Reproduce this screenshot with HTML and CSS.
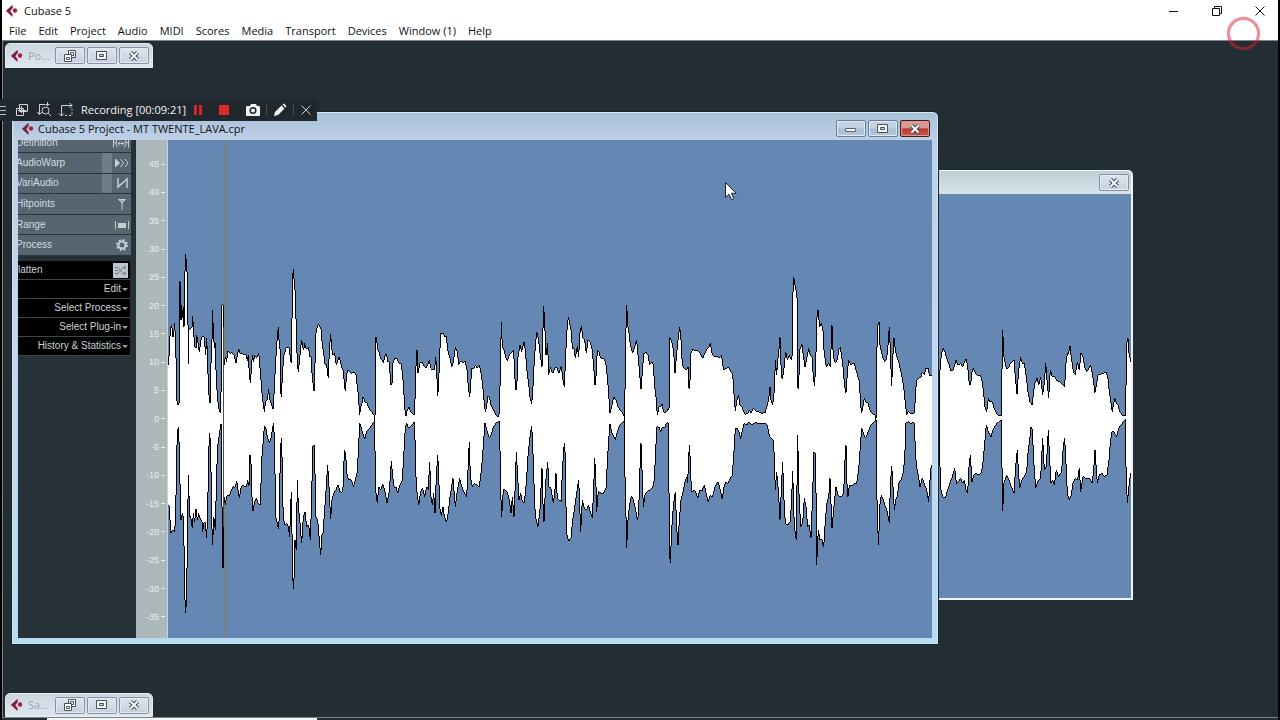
FILE: index.html
```
<!DOCTYPE html>
<html lang="en">
<head>
<meta charset="utf-8">
<title>Cubase 5</title>
<link rel="stylesheet" href="styles.css">
</head>
<body>
<svg class="defs" aria-hidden="true">
  <defs>
    <symbol id="logo" viewBox="0 0 12 12"><path d="M6.5 0v3L4.200 6l2.300 3v3L0 6z" fill="#8c1c3c"/><path d="M6.500 0v3L4.200 6H0z" fill="#6d2640"/><circle cx="9" cy="5.500" r="2.200" fill="#b01c40"/></symbol>
    <symbol id="restore" viewBox="0 0 12 12"><path d="M4.500.500h7v7h-7z" fill="#fff" stroke="#46505f"/><path d="M6.500 2.500h3v3h-3z" fill="none" stroke="#46505f"/><path d="M.500 4.500h7v7h-7z" fill="#fff" stroke="#46505f"/><path d="M2.500 7.500h3v2h-3z" fill="none" stroke="#46505f"/></symbol>
    <symbol id="max" viewBox="0 0 12 10"><path d="M.5.5h10v8H.5z" fill="#fff" stroke="#46505f"/><path d="M3.500 3.500h4v2h-4z" fill="#cfd8e4" stroke="#46505f"/></symbol>
    <symbol id="min" viewBox="0 0 12 10"><path d="M.5 4.500h10v3H.5z" fill="#fff" stroke="#56677c"/></symbol>
    <symbol id="cross" viewBox="0 0 12 10"><path d="M2.500 1.500l7 7m0-7l-7 7" stroke="#3f4857" stroke-width="4"/><path d="M2.500 1.500l7 7m0-7l-7 7" stroke="#fff" stroke-width="2"/></symbol>
  </defs>
</svg>

<div class="app">
  <header class="titlebar">
    <svg class="logo"><use href="#logo"/></svg>
    <h1>Cubase 5</h1>
    <div class="syskeys">
      <button aria-label="Minimize"><svg width="12" height="12"><path d="M1 6.500h9" stroke="#111"/></svg></button>
      <button aria-label="Restore"><svg width="12" height="12" fill="none" stroke="#111"><path d="M1.500 3.500h7v7h-7zM3.500 3V1.500h7v7H9"/></svg></button>
      <button aria-label="Close"><svg width="12" height="12"><path d="M1.500 1.500l9 9m0-9l-9 9" stroke="#111"/></svg></button>
    </div>
  </header>
  <nav class="menu">
    <button>File</button><button>Edit</button><button>Project</button><button>Audio</button><button>MIDI</button><button>Scores</button><button>Media</button><button>Transport</button><button>Devices</button><button>Window (1)</button><button>Help</button>
  </nav>

  <main class="desktop">
    <section class="mini mini-top">
      <svg class="logo"><use href="#logo"/></svg><span>Po...</span>
      <button aria-label="Restore"><svg width="12" height="12"><use href="#restore"/></svg></button>
      <button aria-label="Maximize"><svg width="12" height="10"><use href="#max"/></svg></button>
      <button aria-label="Close"><svg width="12" height="10"><use href="#cross"/></svg></button>
    </section>

    <section class="back">
      <div class="back-head"><button aria-label="Close"><svg width="12" height="10"><use href="#cross"/></svg></button></div>
      <svg class="back-wave" viewBox="930 194 202 404" preserveAspectRatio="xMinYMin slice">
        <g class="wave" transform="translate(930 320) scale(.3333)">
          <path d="M29 295L30 150 32 120 36 95 40 85 45 95 50 115 56 130 63 152 70 150 78 120 84 135 92 130 98 140 103 125 109 117 114 150 118 195 122 195 125 160 130 143 136 160 145 168 151 165 157 185 161 220 165 260 170 275 175 235 180 245 187 245 192 265 200 280 208 288 214 288 216 150 218 30 222 110 229 145 235 145 241 130 252 120 256 170 261 222 266 150 272 112 277 130 283 130 289 170 294 215 300 245 306 255 311 215 315 190 321 175 326 195 332 172 338 225 343 190 347 128 351 180 356 235 361 150 367 170 374 170 381 182 388 185 395 190 404 200 408 130 412 100 416 100 420 78 425 120 430 155 436 165 442 125 448 150 453 100 459 110 464 140 470 155 477 145 482 135 488 165 495 218 500 190 504 165 512 163 520 160 528 157 534 175 538 215 547 275 550 255 554 235 559 250 564 255 569 275 577 285 586 287 588 200 590 70 594 55 597 100 602 125 610 140 610 295"/>
          <path d="M29 295L30 440 33 510 38 530 46 535 53 510 60 490 67 470 74 445 79 490 86 485 92 475 98 490 103 480 108 510 113 520 117 440 121 405 126 485 132 465 139 460 146 465 154 460 160 420 164 370 169 315 175 335 183 350 189 330 197 315 206 305 214 300 216 440 218 572 222 490 230 465 237 480 244 500 252 520 257 440 262 390 265 450 269 505 275 480 283 470 290 455 294 400 299 360 303 320 307 330 311 420 317 505 323 485 332 475 338 355 343 450 349 440 355 330 359 420 363 490 368 480 373 495 379 450 386 470 395 455 400 380 404 355 408 430 412 520 418 540 424 525 429 490 436 475 443 480 448 445 452 515 459 470 468 475 478 475 487 490 491 450 495 390 502 490 508 465 516 460 523 470 531 465 537 420 541 370 546 335 552 335 560 350 566 325 575 312 586 298 588 440 592 550 597 500 602 460 610 448 610 295"/>
        </g>
      </svg>
    </section>

    <section class="project">
      <div class="project-head">
        <svg class="logo"><use href="#logo"/></svg>
        <h2>Cubase 5 Project - MT TWENTE_LAVA.cpr</h2>
        <button aria-label="Minimize"><svg width="12" height="10"><use href="#min"/></svg></button>
        <button aria-label="Maximize"><svg width="12" height="10"><use href="#max"/></svg></button>
        <button class="danger" aria-label="Close"><svg width="12" height="10"><use href="#cross"/></svg></button>
      </div>
      <div class="editor">
        <aside class="inspector">
          <div class="tabs">
            <button class="cut"><span>Definition</span><svg width="18" height="12" fill="none" stroke="#c5ced3"><path d="M1.500 10.500v-8h3v3h-3m2 0l2 5M6 6.500h6M8 4.500l-2 2 2 2m2-4l2 2-2 2m6.500 2v-8h-3v3h3m-2 0l-2 5"/></svg></button>
            <button><span>AudioWarp</span><i></i><svg width="16" height="12" fill="none" stroke="#c5ced3"><path d="M1.500 2l4 4-4 4z" fill="#c5ced3"/><path d="M6.500 2l3 4-3 4m4.500-8l3 4-3 4"/></svg></button>
            <button><span>VariAudio</span><i></i><svg width="16" height="12" fill="none" stroke="#c5ced3" stroke-width="1.500"><path d="M4 1v9L13 2v9M4 10l3-3"/></svg></button>
            <button><span>Hitpoints</span><svg width="16" height="12" fill="none" stroke="#c5ced3"><path d="M4.500 1.500h7L8 5z" fill="#9aa6ad"/><path d="M8 4v8"/></svg></button>
            <button><span>Range</span><svg width="16" height="12" fill="none" stroke="#c5ced3"><path d="M1.500 2v8m13-8v8"/><path d="M4 4h8v5H4z" fill="#c5ced3" stroke="none"/></svg></button>
            <button><span>Process</span><svg width="16" height="12" fill="none" stroke="#c5ced3"><circle cx="8" cy="6" r="3.500" stroke-width="2"/><circle cx="8" cy="6" r="5" stroke-width="2" stroke-dasharray="2 1.930"/></svg></button>
          </div>
          <div class="actions">
            <button class="flatten"><span>latten</span><svg width="15" height="15"><path d="M0 0h15v15H0z" fill="#b9c5cb"/><path d="M2 4.500h3l5 6h3M2 10.500h3l5-6h3M11 3l2 1.500L11 6m0 3l2 1.500-2 1.500M2 7.500h3" fill="none" stroke="#6d7c86"/></svg></button>
            <button>Edit<b></b></button>
            <button>Select Process<b></b></button>
            <button>Select Plug-in<b></b></button>
            <button>History &amp; Statistics<b></b></button>
          </div>
        </aside>
        <div class="scale">
          <span>45</span><span>40</span><span>35</span><span>30</span><span>25</span><span>20</span><span>15</span><span>10</span><span>5</span><span>0</span><span>-5</span><span>-10</span><span>-15</span><span>-20</span><span>-25</span><span>-30</span><span>-35</span>
        </div>
        <svg class="main-wave" viewBox="168 140 764 498">
          <path d="M224.500 140v498" stroke="#827f6c" stroke-width="2"/>
          <g class="wave" transform="translate(160 240) scale(.3333)">
            <path d="M24 537L24 375 26 350 29 345 30 290 32 262 35 255 37 270 39 292 42 275 44 250 46 295 48 350 50 470 52 495 57 495 58 380 60 122 61 230 63 240 65 195 67 235 70 200 72 260 74 120 77 42 80 90 82 100 84 250 85 372 87 268 93 265 96 262 98 228 100 265 102 292 105 320 108 325 110 285 114 310 118 335 121 315 124 292 128 288 132 290 134 310 137 345 140 295 142 340 144 400 147 465 150 490 153 370 156 300 158 210 160 285 164 325 166 310 168 390 172 470 178 515 182 518 184 400 186 195 190 195 190 255 192 375 196 350 200 365 203 332 210 340 216 338 222 345 228 368 232 345 236 328 240 340 250 342 258 345 262 362 265 345 268 400 271 430 274 390 277 345 281 365 284 345 290 355 296 338 299 370 303 420 307 470 313 515 317 485 322 478 326 448 329 475 335 495 340 508 343 440 346 385 349 330 352 290 355 260 357 300 360 320 361 440 364 470 368 390 372 345 378 325 382 322 388 325 392 365 395 368 397 120 400 88 403 130 406 160 409 270 412 370 415 395 420 345 422 325 425 300 428 320 431 330 434 310 438 325 442 325 446 322 449 350 453 350 456 400 459 430 462 453 465 370 467 285 472 260 476 253 480 262 484 270 487 320 491 335 494 372 500 375 505 415 508 330 512 283 515 320 518 345 524 340 529 375 534 360 538 350 542 368 546 385 550 390 553 430 556 453 559 415 562 390 568 395 576 400 582 395 588 405 591 430 595 465 599 525 602 500 607 485 609 470 615 485 621 490 627 505 635 515 641 526 645 526 645 537"/>
            <path d="M24 537L24 795 28 800 30 840 33 880 38 870 44 875 47 830 49 700 52 575 56 562 58 650 61 770 63 840 67 820 70 830 73 960 75 1080 77 1118 80 1070 82 900 84 780 86 705 88 830 92 830 97 865 100 820 104 845 108 808 112 840 116 820 120 835 126 845 128 875 132 850 135 845 140 893 143 820 146 640 149 580 152 620 155 840 158 915 161 830 166 870 170 700 173 620 180 570 183 552 185 600 187 983 190 983 190 880 192 770 196 795 200 768 207 768 214 752 218 740 226 742 230 722 234 750 238 773 243 745 248 735 254 740 260 740 263 720 267 738 270 645 273 670 276 770 279 812 284 785 289 775 294 790 300 795 303 730 306 650 310 600 313 560 317 562 322 590 328 610 333 595 338 565 341 548 343 600 345 700 347 830 351 845 355 868 358 830 361 640 364 595 366 650 369 800 373 855 380 850 385 860 389 890 392 800 394 755 396 880 398 1000 400 1046 403 1000 405 900 409 930 412 720 415 800 420 850 425 910 430 830 435 815 440 860 446 855 451 900 455 780 458 620 462 615 465 700 467 830 473 840 478 900 482 945 486 885 490 878 493 820 497 770 503 675 507 740 512 838 516 780 521 760 528 750 534 735 540 755 546 758 550 735 553 630 557 640 560 700 566 720 574 720 581 740 586 720 591 700 595 640 599 550 603 560 608 580 614 597 620 575 630 565 638 550 645 543 645 537"/>
            <path class="thin" d="M192 260V860"/>
          </g>
          <g class="wave" transform="translate(370 290) scale(.3333)">
            <path d="M13 387L15 378 17 250 18 140 21 160 24 180 28 190 32 205 40 218 46 195 50 195 53 215 58 215 62 285 66 280 69 220 74 205 80 205 86 218 94 222 98 255 101 300 105 360 108 378 112 360 117 352 121 362 127 370 133 375 135 330 138 230 141 180 144 250 150 220 156 215 160 225 168 235 173 225 178 210 182 235 188 240 194 240 197 200 200 240 203 318 206 280 209 190 213 130 220 130 224 140 229 138 233 180 240 205 245 230 250 215 256 172 262 185 266 225 272 213 280 220 285 212 291 240 295 290 299 322 302 280 306 235 312 235 317 225 322 235 328 225 333 250 338 285 342 330 346 367 350 345 354 318 359 325 363 345 370 360 378 375 384 382 388 370 391 250 394 97 397 170 402 180 407 200 412 213 418 195 424 190 430 180 434 230 436 300 440 300 444 200 450 165 455 185 462 155 466 180 470 235 476 280 480 320 485 342 488 310 492 230 496 170 500 125 505 145 509 180 516 232 518 150 521 48 525 120 528 195 533 160 536 255 541 232 548 250 555 235 560 232 567 250 574 228 578 265 583 290 586 220 590 130 595 82 599 100 604 125 607 175 612 175 616 205 622 168 626 200 630 130 634 108 639 145 644 150 649 190 654 150 660 155 666 175 670 215 675 285 678 260 682 180 687 185 692 205 700 205 707 215 712 260 716 310 720 368 725 350 731 320 738 330 744 350 752 362 760 372 763 380 763 387"/>
            <path d="M13 387L15 480 17 600 22 640 26 590 32 600 38 582 45 605 51 638 57 610 61 560 64 512 68 560 73 595 78 590 83 610 90 585 97 570 101 500 105 430 109 398 115 412 120 412 128 402 134 395 136 500 139 590 146 645 152 605 158 595 164 620 170 590 175 600 179 515 183 620 187 645 191 610 195 670 199 560 203 495 206 550 209 650 214 678 219 650 223 680 230 697 235 665 240 620 245 590 249 565 256 650 262 600 269 565 275 590 282 605 290 620 294 540 298 455 301 560 307 590 313 580 320 585 327 592 332 560 337 510 341 450 345 400 350 420 358 443 364 435 370 410 378 400 388 393 390 480 392 600 395 680 400 600 406 600 413 610 419 635 423 670 427 620 432 680 436 580 439 485 443 560 447 630 452 610 457 635 463 640 469 580 474 500 479 450 485 408 488 460 492 580 496 680 504 710 510 660 516 535 519 640 522 695 527 580 533 515 537 590 543 595 550 640 555 600 558 550 562 625 568 630 574 635 577 540 583 460 586 500 588 650 591 735 596 753 603 745 608 690 613 660 620 610 626 570 629 640 632 725 637 630 643 655 650 660 655 645 661 665 667 683 671 600 674 505 677 550 680 665 685 605 692 608 700 612 708 595 712 520 716 450 720 402 725 425 731 440 736 450 742 425 750 405 763 392 763 387"/>
          </g>
          <g class="wave" transform="translate(560 290) scale(.3333)">
            <path d="M193 387L195 300 197 150 200 45 204 110 207 130 211 165 218 190 224 170 230 150 234 195 238 240 243 298 248 230 252 190 258 187 264 195 269 225 275 215 280 225 284 290 288 320 292 375 297 350 302 350 306 342 311 365 317 368 324 358 327 360 329 142 335 155 341 185 345 250 349 200 353 160 359 110 363 150 367 225 373 235 379 240 384 230 386 290 389 298 393 190 398 178 405 183 414 183 420 190 428 205 435 190 440 178 447 172 451 160 456 190 464 200 471 198 478 205 484 195 491 240 498 235 506 232 513 245 518 250 521 300 526 362 531 330 536 315 540 345 546 350 551 365 556 375 560 368 564 370 569 360 573 370 580 355 587 362 600 368 605 370 615 368 622 345 626 330 630 290 633 330 638 345 642 310 644 280 646 210 650 255 653 210 656 190 660 142 664 250 667 268 672 235 677 185 682 210 688 195 694 210 697 195 698 30 701 -40 707 -5 711 10 713 295 716 295 719 180 726 163 730 195 735 230 741 200 746 175 751 195 756 200 760 260 764 288 768 190 770 90 774 60 779 110 784 100 789 120 792 180 799 232 806 220 811 230 816 105 820 200 826 220 832 210 836 180 841 172 846 205 850 240 854 290 858 308 862 250 866 210 873 225 882 218 890 245 897 270 901 320 904 370 909 350 913 325 918 335 925 340 929 360 937 370 947 377 947 387"/>
            <path d="M193 387L195 560 198 680 200 773 204 690 208 650 214 618 220 630 226 655 232 690 236 670 239 560 243 460 246 540 250 650 256 610 262 605 270 600 278 592 283 570 287 480 291 410 297 412 302 425 308 410 313 415 320 398 325 400 327 600 328 780 331 820 335 720 340 650 346 605 350 710 354 765 358 690 363 630 369 605 374 580 380 560 383 580 386 500 389 465 392 560 396 605 403 600 408 608 413 625 419 600 426 602 433 585 438 610 445 635 451 615 457 622 464 595 470 580 475 575 481 600 487 628 492 590 498 575 503 582 509 570 517 555 521 500 526 415 532 415 537 425 542 448 547 420 553 400 560 405 568 395 574 405 582 400 588 398 600 402 615 400 622 405 626 430 632 445 640 450 643 500 646 600 650 545 655 600 660 690 664 600 668 515 671 610 676 700 683 705 691 695 695 630 698 542 703 710 709 750 713 435 717 610 722 710 728 700 733 625 738 650 743 710 748 705 753 745 758 610 762 485 766 490 769 660 770 825 775 720 780 750 786 750 791 772 797 680 802 630 806 625 810 565 816 715 822 650 828 590 834 615 844 622 851 610 855 510 858 465 861 580 864 620 868 585 876 588 883 580 890 580 896 540 901 470 905 415 910 430 917 445 925 425 932 405 947 392 947 387"/>
          </g>
          <g class="wave" transform="translate(750 260) scale(.3333)">
            <path d="M378 477L380 330 382 200 387 185 389 250 393 270 398 290 404 305 409 300 413 270 418 200 421 270 425 378 428 300 432 235 436 270 441 290 447 310 453 335 458 360 462 390 465 420 470 465 475 455 483 460 493 460 497 400 499 365 505 355 514 352 517 335 523 345 528 325 535 325 538 345 552 348 552 477"/>
            <path d="M378 477L380 650 382 780 386 855 389 740 394 705 400 720 406 740 412 755 418 790 421 680 425 618 429 680 433 750 437 720 442 710 447 670 455 655 461 630 465 570 468 490 474 485 482 490 492 488 496 560 499 620 504 640 510 680 517 655 522 670 530 690 536 725 540 660 544 615 552 640 552 477"/>
          </g>
        </svg>
      </div>
    </section>

    <section class="mini mini-bottom">
      <svg class="logo"><use href="#logo"/></svg><span>Sa...</span>
      <button aria-label="Restore"><svg width="12" height="12"><use href="#restore"/></svg></button>
      <button aria-label="Maximize"><svg width="12" height="10"><use href="#max"/></svg></button>
      <button aria-label="Close"><svg width="12" height="10"><use href="#cross"/></svg></button>
    </section>
  </main>
  <footer class="taskstrip"><i></i></footer>
</div>

<div class="recorder">
  <svg width="6" height="14" stroke="#b5babd"><path d="M0 3.500h6M0 7.500h6M0 11.500h6"/></svg>
  <button aria-label="Windows"><svg width="16" height="16" fill="none" stroke="#d0d4d6"><path d="M5.500 2.500h8v7h-8zM2.500 6.500h7v7h-7zM7.500 4v7M4 8.500h8"/></svg></button>
  <button aria-label="Zoom region"><svg width="16" height="16" fill="none" stroke="#d0d4d6"><path d="M9 2.500H3.500V12M1 10L3.500 12.500 6 10M11.500 0v4M9.500 2.500h4"/><circle cx="9.500" cy="8.500" r="3.500"/><path d="M12 11l3 3"/></svg></button>
  <button aria-label="Select area"><svg width="16" height="16" fill="none" stroke="#d0d4d6"><path d="M3.500 14V3.500H14M1 11.500L3.500 14 6 11.500M11.500 1L14 3.500 11.500 6"/><path d="M7 13.500h7V6" stroke-dasharray="2 2"/></svg></button>
  <output>Recording [00:09:21]</output>
  <button aria-label="Pause"><svg width="12" height="12" fill="#d8262c"><path d="M2 1h3v10H2zM7 1h3v10H7z"/></svg></button>
  <button class="stop" aria-label="Stop"><svg width="12" height="12"><path d="M1 1h10v10H1z" fill="#dd2a24"/></svg></button>
  <button class="camera" aria-label="Screenshot"><svg width="14" height="14"><path d="M1 3h3l1-2h5l1 2h2q1 0 1 1v8q0 1-1 1H1q-1 0-1-1V4q0-1 1-1z" fill="#f2f4f5"/><circle cx="7" cy="7.500" r="2.800" fill="#f2f4f5" stroke="#20272c" stroke-width="1.500"/></svg></button>
  <i></i>
  <button aria-label="Draw"><svg width="14" height="14" fill="#f2f4f5"><path d="M1 13l1-4 6.500-6.500 3 3L5 12zM9.500 1.500l1-1q1 0 3 3l-1 1z"/></svg></button>
  <i></i>
  <button aria-label="Close recorder"><svg width="12" height="12"><path d="M1.500 1.500l9 9m0-9l-9 9" stroke="#c9cdcf"/></svg></button>
</div>
<div class="ring"></div>
<svg class="pointer" width="12" height="19"><path d="M.5.5v15l3.500-3.300 2.500 5.500 2.300-1-2.400-5.400h4.800z" fill="#fff" stroke="#1d232b"/></svg>
</body>
</html>
```
FILE: styles.css
```
* { box-sizing: border-box; }
body {
  margin: 0;
  height: 100vh;
  overflow: hidden;
  position: relative;
  background: #000;
  font: 11px/16px "Open Sans", "Noto Sans", sans-serif;
  color: #111;
}
button {
  display: flex;
  align-items: center;
  justify-content: center;
  border: 0;
  padding: 0;
  background: none;
  font: inherit;
  color: inherit;
}
svg { display: block; flex: none; }
h1, h2 { margin: 0; font: inherit; }
.defs { position: absolute; width: 0; height: 0; }
.logo { width: 12px; height: 12px; }

.app { display: flex; flex-direction: column; height: 100vh; padding: 0 2px; }
.titlebar { display: flex; align-items: center; gap: 6px; height: 21px; padding-left: 4px; background: #fff; }
.syskeys { display: flex; margin-left: auto; gap: 31px; padding-right: 12px; height: 19px; }
.menu { display: flex; gap: 12px; height: 19px; padding-left: 7px; background: #fff; }

.desktop {
  flex: 1;
  position: relative;
  background: #222e34;
  border: solid #7d8487;
  border-width: 1px 0 1px 1px;
}
.taskstrip { height: 2px; background: #222e34; padding-left: 45px; }
.taskstrip i { display: block; width: 270px; height: 2px; background: #f1f5f7; }

.mini {
  position: absolute;
  left: 2px;
  display: flex;
  align-items: center;
  gap: 2px;
  width: 148px;
  height: 25px;
  padding: 0 3px 0 5px;
  background: linear-gradient(#cbd6df, #dfe7ee);
  border: 1px solid #e6edf2;
  border-radius: 5px 5px 0 0;
  color: #9aa5ad;
}
.mini-top { top: 2px; }
.mini-bottom { bottom: 0; height: 24px; }
.mini span { flex: 1; padding-left: 3px; }
.mini button, .back button, .project-head button {
  width: 30px;
  height: 17px;
  border: 1px solid #8793a5;
  border-radius: 2px;
  background: linear-gradient(#dce4ee, #c6d0de);
  box-shadow: inset 0 0 0 1px #e3e9f1;
}

.back { position: absolute; left: 927px; top: 129px; width: 203px; height: 430px; padding: 0 2px 2px 0; background: #edf2f4; border-radius: 0 5px 0 0; }
.back-head { display: flex; align-items: center; justify-content: flex-end; height: 24px; padding-right: 2px; border-top: 1px solid #f0f5f7; border-radius: 0 4px 0 0; background: linear-gradient(#bfcdd6, #d8e3e8); }
.back-wave { width: 201px; height: 404px; background: #6487b3; }

.project {
  position: absolute;
  left: 8px;
  top: 70px;
  width: 928px;
  height: 534px;
  padding: 0 6px 6px;
  border: 1px solid #16222c;
  border-radius: 6px 6px 0 0;
  background: linear-gradient(#a7bfd8, #bed0e6 28px, #c3d7ee 60%, #b4dcf1);
  box-shadow: inset 0 0 0 1px #cfe6f5;
}
.project-head { display: flex; align-items: center; gap: 2px; height: 28px; padding: 5px 2px 0 4px; }
.project-head h2 { flex: 1; padding-left: 2px; }
.project-head button { border-color: #66809c; background: linear-gradient(#c3d3e4 48%, #a6bad0 52%, #b5cadf); }
.project-head .danger { border-color: #421b22; background: linear-gradient(#dc9990 46%, #b83b32 52%, #cb5c4b); box-shadow: inset 0 0 0 1px #d99b90; }
.editor { display: flex; height: 498px; }
.inspector { width: 118px; background: #263238; overflow: hidden; font: 10px/12px "Liberation Sans", sans-serif; }
.tabs { display: grid; grid-template-rows: 13px repeat(5, 1fr); width: 113px; height: 116px; }
.tabs button { justify-content: flex-start; overflow: hidden; padding-right: 1px; border-bottom: 1px solid #28343b; background: #566570; color: #d3dce0; }
.tabs .cut { align-items: flex-end; padding-bottom: 3px; }
.tabs span { flex: 1; margin-left: -2px; text-align: left; }
.tabs i { width: 10px; margin-right: 2px; align-self: stretch; background: #6f7d86; }
.actions { display: grid; grid-template-rows: repeat(5, 19px); width: 112px; margin-top: 5px; background: #000; color: #cbd2d5; }
.actions button { justify-content: flex-end; gap: 1px; padding-right: 2px; border-bottom: 1px solid #39464b; }
.actions .flatten span { flex: 1; text-align: left; }
.actions b { border: solid transparent; border-width: 3px 3px 0; border-top-color: #98a1a5; }
.scale {
  display: grid;
  grid-template-rows: repeat(17, 1fr);
  align-items: center;
  width: 32px;
  padding: 10px 2px 7px 0;
  background: #adb8ba;
  border-right: 1px solid #c9d2d6;
  color: #e9eeee;
  font: 9px/12px "Liberation Sans", sans-serif;
}
.scale span { display: flex; align-items: center; justify-content: flex-end; gap: 2px; }
.scale span::after { content: ""; width: 4px; height: 1px; background: #eef2f2; }
.main-wave { flex: 1; min-width: 0; height: 498px; background: #6487b3; }
.wave { fill: #fff; stroke: #000; stroke-width: 3; shape-rendering: crispEdges; }
.wave .thin { stroke: #4c4c48; }

.recorder {
  position: absolute;
  left: 0;
  top: 99px;
  display: flex;
  align-items: center;
  gap: 6px;
  width: 317px;
  height: 22px;
  padding-right: 5px;
  background: #20282d;
  color: #f0f2f3;
}
.recorder > svg { margin-right: 2px; }
.recorder .stop { margin: 0 10px 0 8px; }
.recorder i { width: 1px; height: 10px; background: #4c555a; }
.recorder button { flex: none; }
.recorder output { margin-left: 1px; white-space: nowrap; }
.ring { position: absolute; left: 1227px; top: 17px; width: 33px; height: 33px; border: 3px solid rgba(224, 30, 50, .5); border-radius: 50%; box-shadow: 0 0 1px rgba(224, 30, 50, .5); }
.pointer { position: absolute; left: 725px; top: 182px; }
```
